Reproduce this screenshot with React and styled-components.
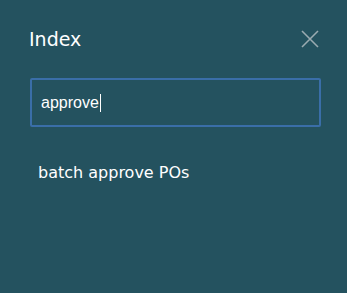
import styled, { createGlobalStyle } from "styled-components";

const Global = createGlobalStyle`
  html, body {
    margin: 0;
    padding: 0;
    background: #24525f;
  }
`;

const Panel = styled.div`
  width: 347px;
  height: 293px;
  background: #24525f;
  box-sizing: border-box;
  padding: 27px 28px 0 30px;
  font-family: "DejaVu Sans", Verdana, sans-serif;
  color: #ffffff;
`;

const Header = styled.div`
  display: flex;
  align-items: center;
  justify-content: space-between;
  height: 24px;
`;

const Title = styled.h2`
  margin: 0 0 0 -1px;
  font-size: 19px;
  font-weight: normal;
  color: #ffffff;
`;

const CloseButton = styled.button`
  background: none;
  border: none;
  padding: 0;
  width: 18px;
  height: 18px;
  display: flex;
  cursor: pointer;
`;

const SearchBox = styled.div`
  margin-top: 27px;
  width: 291px;
  height: 49px;
  box-sizing: border-box;
  border: 2px solid #3a6ea8;
  border-radius: 2px;
  display: flex;
  align-items: center;
  padding-left: 9px;
  font-family: "Liberation Sans", Arial, sans-serif;
  font-size: 16px;
  color: #ffffff;
`;

const Caret = styled.span`
  display: inline-block;
  width: 1px;
  height: 18px;
  background: #ffffff;
  margin-left: 1px;
`;

const ResultList = styled.ul`
  list-style: none;
  margin: 36px 0 0 8px;
  padding: 0;
`;

const ResultItem = styled.li`
  font-size: 16px;
  color: #ffffff;
`;

export default function App() {
  return (
    <>
      <Global />
      <Panel>
        <Header>
          <Title>Index</Title>
          <CloseButton aria-label="Close">
            <svg width="18" height="18" viewBox="0 0 18 18">
              <path d="M1 1 L17 17 M17 1 L1 17" stroke="#9aaab0" strokeWidth="1.6" fill="none" />
            </svg>
          </CloseButton>
        </Header>
        <SearchBox>
          approve<Caret />
        </SearchBox>
        <ResultList>
          <ResultItem>batch approve POs</ResultItem>
        </ResultList>
      </Panel>
    </>
  );
}
